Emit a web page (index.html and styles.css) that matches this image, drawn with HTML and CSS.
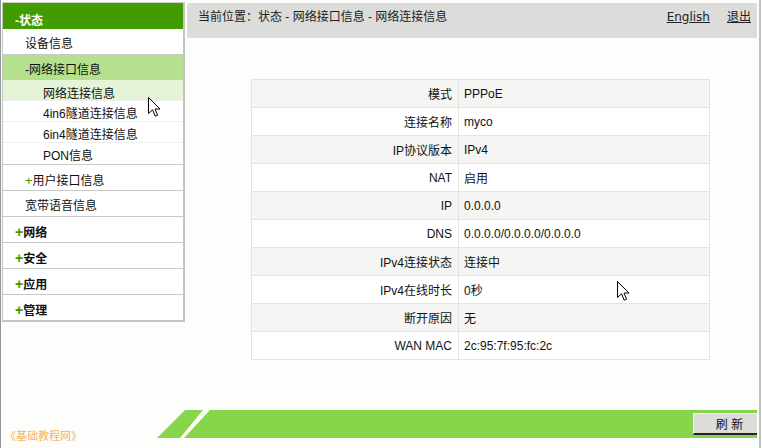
FILE: index.html
```html
<!DOCTYPE html>
<html>
<head>
<meta charset="utf-8">
<link rel="stylesheet" href="styles.css">
</head>
<body>
<div class="page">
  <div class="top">
    <nav class="sidebar">
      <div class="nav-head">-状态</div>
      <div class="nav-item">设备信息</div>
      <div class="nav-item nav-open">-网络接口信息</div>
      <div class="sub-list">
        <div class="sub-item sub-active">网络连接信息</div>
        <div class="sub-item">4in6隧道连接信息</div>
        <div class="sub-item">6in4隧道连接信息</div>
        <div class="sub-item">PON信息</div>
      </div>
      <div class="nav-item"><span class="plus-thin">+</span>用户接口信息</div>
      <div class="nav-item">宽带语音信息</div>
      <div class="nav-group"><span class="plus">+</span>网络</div>
      <div class="nav-group"><span class="plus">+</span>安全</div>
      <div class="nav-group"><span class="plus">+</span>应用</div>
      <div class="nav-group last"><span class="plus">+</span>管理</div>
    </nav>
    <main class="main">
      <div class="crumb-bar">
        <span class="crumb">当前位置：状态 - 网络接口信息 - 网络连接信息</span>
        <span class="links"><a class="lang">English</a><a class="logout">退出</a></span>
      </div>
      <table class="info">
        <tr class="alt"><td class="k">模式</td><td class="v">PPPoE</td></tr>
        <tr><td class="k">连接名称</td><td class="v">myco</td></tr>
        <tr class="alt"><td class="k">IP协议版本</td><td class="v">IPv4</td></tr>
        <tr><td class="k">NAT</td><td class="v">启用</td></tr>
        <tr class="alt"><td class="k">IP</td><td class="v">0.0.0.0</td></tr>
        <tr><td class="k">DNS</td><td class="v">0.0.0.0/0.0.0.0/0.0.0.0</td></tr>
        <tr class="alt"><td class="k">IPv4连接状态</td><td class="v">连接中</td></tr>
        <tr><td class="k">IPv4在线时长</td><td class="v">0秒</td></tr>
        <tr class="alt"><td class="k">断开原因</td><td class="v">无</td></tr>
        <tr><td class="k">WAN MAC</td><td class="v">2c:95:7f:95:fc:2c</td></tr>
      </table>
    </main>
  </div>
  <footer class="footer">
    <span class="watermark">《基础教程网》</span>
    <div class="band">
      <svg class="slant" width="53" height="28" viewBox="0 0 53 28">
        <polygon points="0,28 28,0 46,0 23,28" fill="#86d54a"/>
        <polygon points="27,28 53,0 53,28" fill="#86d54a"/>
      </svg>
      <div class="band-fill"><button class="refresh">刷 新</button></div>
    </div>
  </footer>
</div>
<svg class="cursor cursor-a" width="13" height="21" viewBox="0 0 13 21"><path d="M0.5,0.5 L0.5,16.5 L4.5,12.8 L7.2,19.2 L9.6,18.2 L7,12 L12,12 Z" fill="#fff" stroke="#000" stroke-width="1"/></svg>
<svg class="cursor cursor-b" width="13" height="21" viewBox="0 0 13 21"><path d="M0.5,0.5 L0.5,16.5 L4.5,12.8 L7.2,19.2 L9.6,18.2 L7,12 L12,12 Z" fill="#fff" stroke="#000" stroke-width="1"/></svg>
</body>
</html>
```
FILE: styles.css
```css
html, body {
  margin: 0;
  padding: 0;
  background: #fdfefb;
}
body {
  width: 762px;
  height: 448px;
  overflow: hidden;
  position: relative;
  font-family: "Liberation Sans", "Noto Sans CJK SC", sans-serif;
  font-size: 12px;
  color: #111;
}
.page {
  width: 758px;
  height: 448px;
  border-left: 1px solid #8e9a98;
  border-right: 2px solid #bfc2c0;
  display: flex;
  flex-direction: column;
}
.top {
  display: flex;
  align-items: flex-start;
  height: 410px;
}
.sidebar {
  width: 180px;
  margin-left: 1px;
  margin-top: 2px;
  border-top: 1px solid #d0d0d0;
  border-left: 1px solid #c4c4c4;
  border-right: 2px solid #c4c4c4;
  border-bottom: 2px solid #c4c4c4;
  background: #fff;
}
.nav-head {
  height: 26px;
  padding-top: 5px;
  line-height: 26px;
  background: #409c00;
  color: #fff;
  font-weight: bold;
  padding-left: 12px;
  box-sizing: border-box;
}
.nav-item {
  height: 22px;
  padding-top: 3px;
  line-height: 25px;
  padding-left: 22px;
  border-bottom: 1px solid #c8c8c8;
}
.nav-open {
  background: #b5e08e;
  border-bottom: none;
}
.sub-list {
  border-bottom: 1px solid #c8c8c8;
}
.sub-item {
  height: 17px;
  padding-top: 3px;
  line-height: 21px;
  padding-left: 40px;
  border-bottom: 1px solid #efefef;
}
.sub-item:first-child {
  height: 16px;
  padding-top: 4px;
}
.sub-item:last-child {
  border-bottom: none;
  height: 18px;
}
.sub-active {
  background: #e5f3d7;
}
.nav-group {
  height: 23px;
  padding-top: 2px;
  line-height: 26px;
  padding-left: 12px;
  font-weight: bold;
  border-bottom: 1px solid #c8c8c8;
}
.nav-group.last {
  border-bottom: none;
}
.plus {
  color: #3d9a00;
  font-weight: bold;
  font-size: 14px;
}
.plus-thin {
  color: #3d9a00;
  font-size: 13px;
}
.main {
  width: 570px;
  margin-left: 2px;
  margin-top: 3px;
}
.crumb-bar {
  height: 35px;
  background: #dcdddb;
  display: flex;
  justify-content: space-between;
  align-items: flex-start;
  padding: 7px 6px 0 11px;
  box-sizing: border-box;
  color: #222;
}
.crumb {
  line-height: 14px;
}
.links {
  display: flex;
  gap: 17px;
  line-height: 14px;
}
.lang {
  font-family: "DejaVu Sans", sans-serif;
  font-size: 12px;
  text-decoration: underline;
  color: #222;
}
.logout {
  text-decoration: underline;
  color: #222;
}
.info {
  margin-top: 41px;
  margin-left: 64px;
  width: 459px;
  border-collapse: collapse;
  background: #fff;
}
.info td {
  height: 27px;
  border: 1px solid #e3e3e1;
  padding: 0;
  vertical-align: middle;
  color: #111;
}
.info tr.alt td {
  background: #f5f5f3;
}
.info td.k {
  width: 200px;
  text-align: right;
  padding-right: 6px;
}
.info td.v {
  padding-left: 5px;
}
.footer {
  height: 38px;
  display: flex;
  align-items: flex-start;
}
.watermark {
  align-self: flex-end;
  margin: 0 0 5px 4px;
  font-size: 11px;
  line-height: 14px;
  color: #f2b562;
  width: 152px;
}
.band {
  display: flex;
  height: 28px;
  flex: 1;
  margin-right: 2px;
}
.slant {
  display: block;
  flex: none;
}
.band-fill {
  flex: 1;
  background: #86d54a;
  display: flex;
  justify-content: flex-end;
  align-items: flex-start;
}
.refresh {
  margin-top: 3px;
  width: 64px;
  height: 22px;
  background: #dcdcd8;
  border: none;
  border-top: 1px solid #f4f4f4;
  border-left: 1px solid #f4f4f4;
  border-bottom: 2px solid #222;
  font-family: "Liberation Sans", "Noto Sans CJK SC", sans-serif;
  font-size: 12px;
  color: #111;
  padding: 0 0 0 8px;
}
.cursor {
  position: absolute;
  display: block;
}
.cursor-a {
  left: 148px;
  top: 97px;
}
.cursor-b {
  left: 617px;
  top: 281px;
}
```
